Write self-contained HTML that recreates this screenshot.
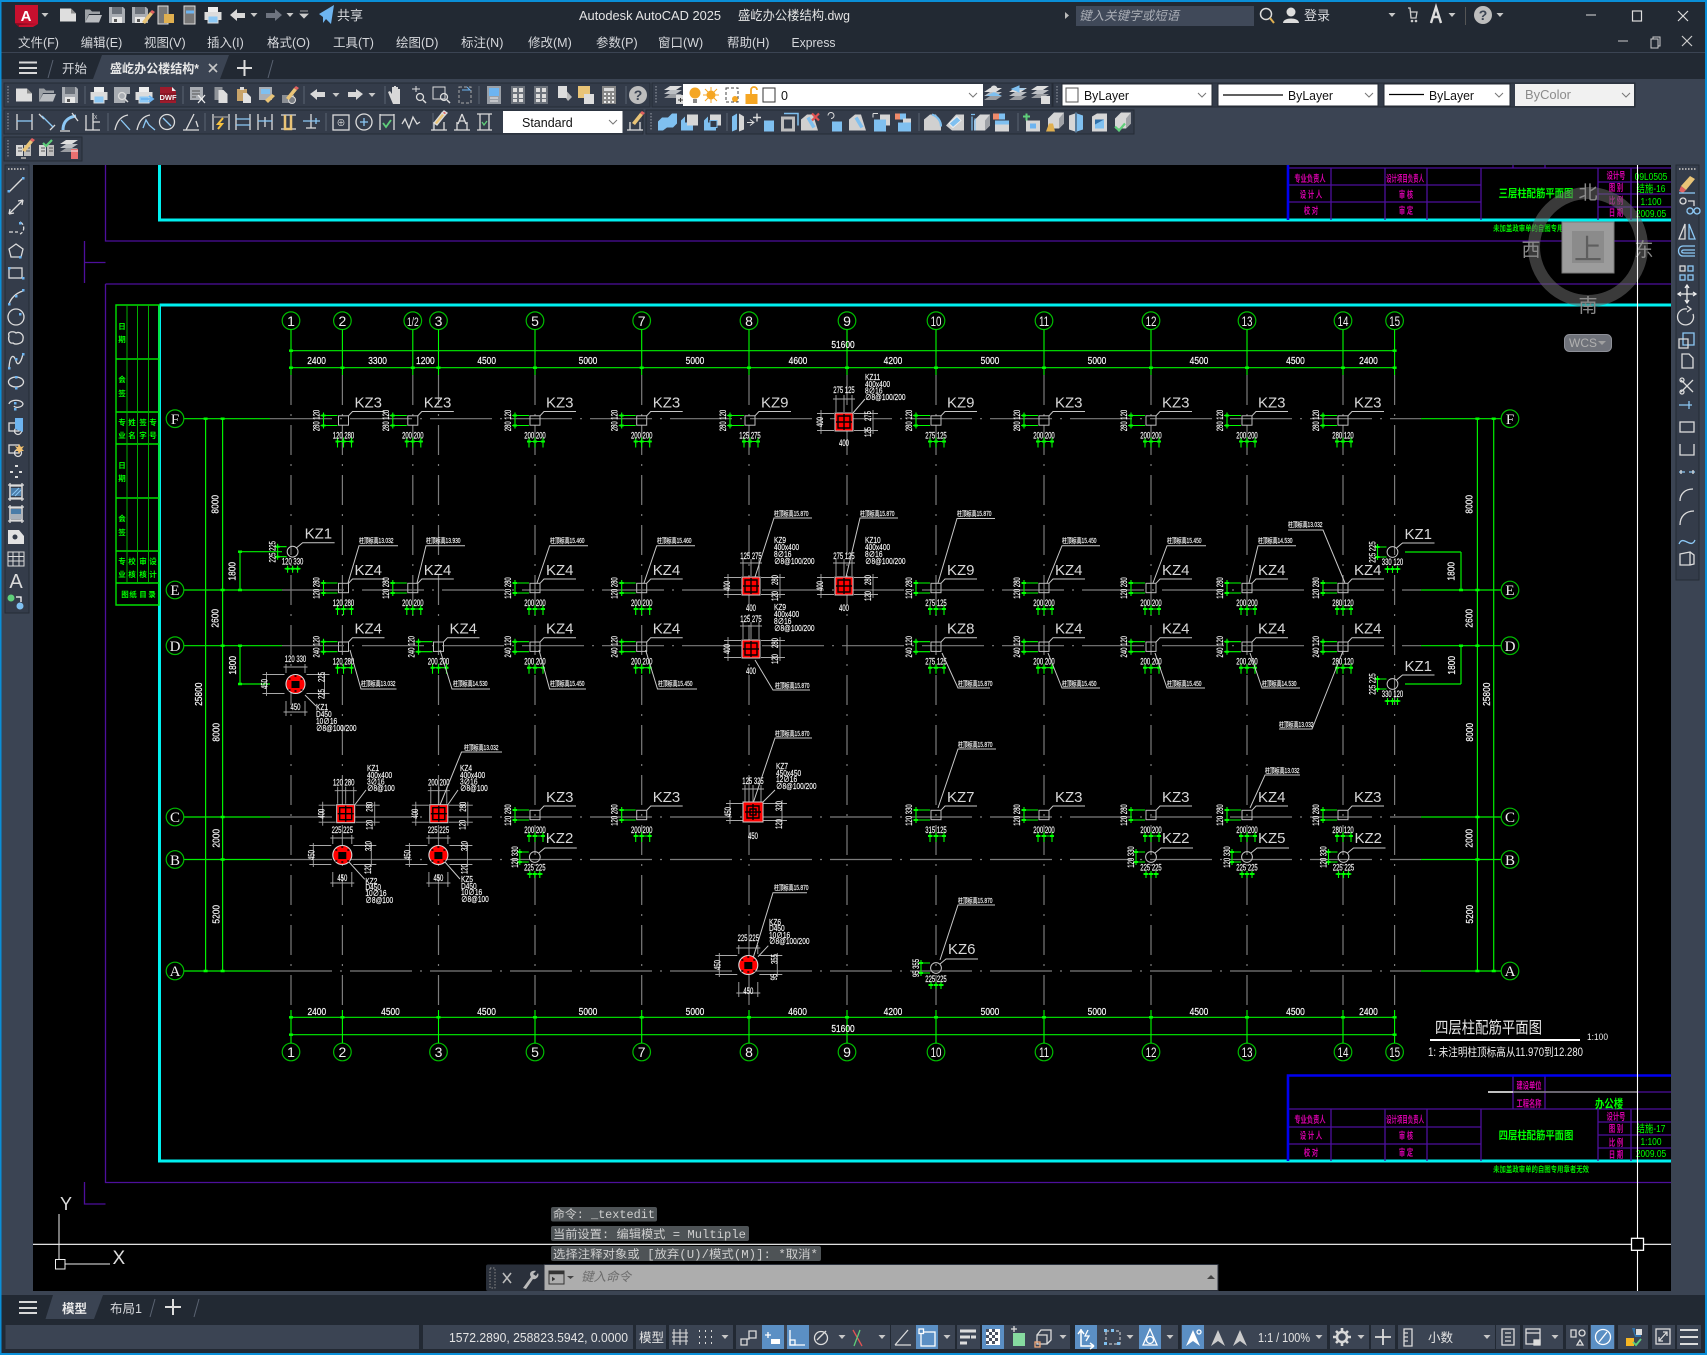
<!DOCTYPE html>
<html lang="zh"><head><meta charset="utf-8"><title>Autodesk AutoCAD 2025</title>
<style>
html,body{margin:0;padding:0;background:#222933;width:1707px;height:1355px;overflow:hidden}
svg{position:absolute;left:0;top:0;display:block}
text{font-family:"Liberation Sans","Noto Sans CJK SC",sans-serif}
.u{font-size:12.5px;fill:#d6d8dc}
.k{font-size:15px;fill:#d8d8d8}
.n{font-size:9px;fill:#f4f4f4;stroke:#fff;stroke-width:.15;text-anchor:middle;transform-box:fill-box;transform-origin:center;transform:scaleX(.66)}
.r{font-size:9px;fill:#f4f4f4;stroke:#fff;stroke-width:.15;text-anchor:middle;transform-box:fill-box;transform-origin:center;transform:rotate(-90deg) scaleX(.66)}
.m{font-size:10.5px;fill:#f4f4f4;stroke:#fff;stroke-width:.2;text-anchor:middle;transform-box:fill-box;transform-origin:center;transform:scaleX(.8)}
.q{font-size:10.5px;fill:#f4f4f4;stroke:#fff;stroke-width:.2;text-anchor:middle;transform-box:fill-box;transform-origin:center;transform:rotate(-90deg) scaleX(.8)}
.e{font-size:7px;fill:#fff;stroke:#fff;stroke-width:.15;transform-box:fill-box;transform-origin:0 50%;transform:scaleX(.7)}
.a{font-size:8px;fill:#f2f2f2;stroke:#fff;stroke-width:.15;transform-box:fill-box;transform-origin:0 50%;transform:scaleX(.82)}
.b{font-size:14px;fill:#f0f0f0;text-anchor:middle}
.bb{font-size:14px;fill:#f0f0f0;text-anchor:middle;transform-box:fill-box;transform-origin:center;transform:scaleX(.7)}
.l{font-size:15px;fill:#f0f0f0;text-anchor:middle;font-family:"Liberation Serif",serif}
.p{font-size:9.5px;fill:#d400a8;font-weight:700;text-anchor:middle;transform-box:fill-box;transform-origin:center;transform:scaleX(.66)}
.p2{font-size:9.5px;fill:#d400a8;font-weight:700;text-anchor:middle;transform-box:fill-box;transform-origin:center;transform:scaleX(.57)}
.g{font-size:8px;fill:#00e800;font-weight:700;text-anchor:middle;transform-box:fill-box;transform-origin:center;transform:scaleX(.8)}
.h{font-size:11px;fill:#0f0;font-weight:700;text-anchor:middle;transform-box:fill-box;transform-origin:center;transform:scaleX(.85)}
.g2{font-size:10.5px;fill:#00ff00;text-anchor:middle;transform-box:fill-box;transform-origin:center;transform:scaleX(.8)}
.c{font-size:11.5px;fill:#cfcfcf;font-family:"Liberation Mono","Noto Sans CJK SC",monospace}
.w{fill:none;stroke:#dcdcdc;stroke-width:1.3}
.bl{stroke:#8cc8f5}
</style></head><body>
<svg xmlns="http://www.w3.org/2000/svg" width="1707" height="1355" viewBox="0 0 1707 1355">
<defs>
<g id="tri"><path d="M-3.5-2h7L0 2z" fill="#c8c8c8"/></g>
<g id="chev"><path d="M-4-2 0 2 4-2" fill="none" stroke="#777" stroke-width="1"/></g>
<g id="doc"><path d="M-8-6.5H3L8-1.500V6.500H-8z" fill="#dedede"/><path d="M3-6.500V-1.500H8z" fill="#8e8e8e"/></g>
<g id="fold"><path d="M-8-6.500H-3L-1-4.500H7V-2H-4L-8 6.500z" fill="#9da1a6"/><path d="M-4-1H9L6 6.500H-8z" fill="#b9bcc0"/></g>
<g id="save"><path d="M-8-8H6L8-6V8H-8z" fill="#a9adb3"/><path d="M-5-8H5V-1H-5z" fill="#6b717a"/><path d="M-5 2H5V8H-5z" fill="#e8e8e8"/><path d="M-3 4H0V7H-3z" fill="#555"/></g>
<g id="pen"><path d="M-2 7 6-3l3 2L1 9z" fill="#e9c477"/><path d="M6-3l2-2 3 2-2 2z" fill="#e06060"/></g>
<g id="print"><path d="M-5-8H5V-3H-5z" fill="#eee"/><path d="M-8.500-3H8.500V5H-8.500z" fill="#dcdcdc"/><path d="M-5 1H5V8H-5z" fill="#8cc8f5" stroke="#dcdcdc"/></g>
<g id="mag"><circle cx="2" cy="2" r="3.500" fill="none" stroke="#ddd" stroke-width="1.300"/><path d="M5 5l3 3" stroke="#ddd" stroke-width="1.500"/></g>
<g id="dwf"><path d="M-8-8H4L8-4V8H-8z" fill="#9e1b2c"/><path d="M-8-2H8V6H-8z" fill="#8a1626"/><text y="5" font-size="7.500" font-weight="700" text-anchor="middle" fill="#f0f0f0">DWF</text><path d="M4-8V-4H8z" fill="#eee"/></g>
<g id="copy"><path d="M-6-8H2V5H-6z" fill="#8f9399"/><path d="M-2-5H3L7-1V8H-2z" fill="#dedede"/></g>
<g id="paste"><path d="M-7-6H3V6H-7z" fill="#c9a46a"/><path d="M-4-8H0V-5H-4z" fill="#ddd"/><path d="M-1-2H3L7 2V8H-1z" fill="#e2e2e2"/></g>
<g id="hand"><path d="M-6 2-8-3l2-1 2 3V-8h2v6V-9h2v7V-8h2v6V-6h2V3L4 9H-3z" fill="#d8d8d8"/></g>
<g id="bar"><path d="M-7-9H7V9H-7z" fill="#9a9fa6"/><path d="M-5-7H5V1H-5z" fill="#6db4f0"/><path d="M-4 3H4M-4 6H4" stroke="#eee"/></g>
<g id="grd"><path d="M-7-9H7V9H-7z" fill="#6d737c"/><path d="M-5-7H-1v4H-5zM-5-1H-1v4H-5zM-5 4H-1v3H-5zM1-7H5v4H1zM1-1H5v4H1zM1 4H5v3H1z" fill="#ddd"/></g>
<g id="calc"><path d="M-7-9H7V9H-7z" fill="#888"/><path d="M-5-7H5v3H-5z" fill="#ddd"/><path d="M-5-2h2v2h-2zM-1-2h2v2h-2zM3-2h2v2H3zM-5 2h2v2h-2zM-1 2h2v2h-2zM3 2h2v2H3zM-5 6h2v2h-2zM-1 6h2v2h-2zM3 6h2v2H3z" fill="#eee"/></g>
<g id="help"><circle r="9" fill="#bdbdbd"/><text x="0" y="5" font-size="14" font-weight="700" text-anchor="middle" fill="#3b4453">?</text></g>
<g id="lay"><path d="M-9-1H3L9-5-3-5z" fill="#9a9da2" transform="translate(0,4)"/><path d="M-9-1H3L9-5-3-5z" fill="#bcbfc3" transform="translate(0,0)"/><path d="M-9-1H3L9-5-3-5z" fill="#dedede" transform="translate(0,-4)"/></g>
<g id="iso"><path d="M-8-2-2-8H8V3L3 8H-8z" fill="#d6d6d6"/><path d="M3-2H-8-2M3-2 8-8V3L3 8z" fill="#9fa2a7"/></g>
<g id="b3"><path d="M-9 8V-1L-5-5H1L5-9H10V1L6 5H0L-4 8z" fill="#7fc0f0"/></g>
<g id="b4"><path d="M-9-2-5-6V8H-9z" fill="#7fc0f0"/><path d="M-7 0H3V8H-7z" fill="#7fc0f0"/><path d="M-3-8H8V3H4L-3 3z" fill="#d6d6d6"/></g>
<g id="b5"><path d="M-8-6-3-9V7L-8 9z" fill="#7fc0f0"/><path d="M-1-9 4-6V7L-1 9z" fill="#d6d6d6"/></g>
<g id="b6"><path d="M-8-3-2-8H4L9 8H-8z" fill="#d0d0d0"/><path d="M-1-5 5 5" stroke="#7fc0f0" stroke-width="3.500"/></g>
<g id="c"><rect x="-5" y="-4.7" width="10" height="9.4" fill="none" stroke="#bdbdbd"/><path d="M5-4.7 9-9H41" fill="none" stroke="#c8c8c8"/><path d="M-23-5H-6M-23 5H-6M-20-8V8M-6 17V27M0 17V27M8 17V27M-8 21H10" fill="none" stroke="#0f0" stroke-width="1.1"/><path d="M-22-5h4M-22 5h4M-8 21h4M-2 21h4M6 21h4" stroke="#0f0" stroke-width="2"/></g>
<g id="o"><circle r="5.4" fill="none" stroke="#c8c8c8"/><path d="M4-4 10-9H42" fill="none" stroke="#c8c8c8"/><path d="M-18-5H-6M-18 5H-6M-15-8V8M-5 14V21M0 14V21M5 14V21M-8 17H8" fill="none" stroke="#0f0" stroke-width="1.1"/><path d="M-17-5h4M-17 5h4M-7 17h4M-2 17h4M3 17h4" stroke="#0f0" stroke-width="2"/></g>
<g id="rs"><rect x="-9" y="-9" width="18" height="18" fill="#f00" stroke="#d0d0d0"/><path d="M-6-6H6V6H-6zM0-8V8M-8 0H8" fill="none" stroke="#000" stroke-width="1.4"/><path d="M-27-8.5H-10M-27 8.5H-10M-23-12V12M10-8.5H34M10 8.5H34M29-12V12M-8-27V-10M0-27V-10M8-27V-10M-11-23H11" fill="none" stroke="#a8a8a8" stroke-width=".9"/></g>
<g id="rc"><circle r="9.5" fill="#f00" stroke="#d8d8d8" stroke-width="1.1"/><path d="M-4-3H4V4H-4z" fill="#000"/><path d="M-7-5h2M5-5h2M-7 6h2M5 6h2M-1-8h2M-1 7h2" stroke="#000" stroke-width="1.5"/><path d="M-33-9.5H-11M-33 9.5H-11M-29-12V12M11-9.5H34M11 9.5H34M29-12V12M-9.5 17V32M9.5 17V32M-12 28H12M-9.5-20V-11M9.5-20V-11M-12-17H12" fill="none" stroke="#a8a8a8" stroke-width=".9"/></g>
<g id="at"><circle cy="320.7" r="8.8" fill="none" stroke="#0b0" stroke-width="1.2"/><path d="M0 329.5V375" stroke="#0f0" stroke-width="1.1"/><path d="M-2 367.7h4" stroke="#0f0" stroke-width="2.4"/></g>
<g id="ab"><circle cy="1052" r="8.8" fill="none" stroke="#0b0" stroke-width="1.2"/><path d="M0 1043.2V1010" stroke="#0f0" stroke-width="1.1"/><path d="M-2 1017.3h4" stroke="#0f0" stroke-width="2.4"/></g>
<g id="lb"><circle r="8.8" fill="none" stroke="#0b0" stroke-width="1.2"/></g>
</defs>

<!-- chrome backgrounds -->
<rect width="1707" height="1355" fill="#222933"/>
<rect x="0" y="52" width="1707" height="1" fill="#3b4453"/>
<rect x="0" y="79" width="1707" height="86" fill="#3b4453"/>
<rect x="0" y="165" width="33" height="1130" fill="#3b4453"/>
<rect x="1671" y="165" width="36" height="1130" fill="#3b4453"/>
<rect x="33" y="165" width="1638" height="1126" fill="#000"/>
<rect x="0" y="1291" width="1707" height="4" fill="#3b4453"/>

<!-- drawing -->
<svg x="33" y="165" width="1638" height="1126" viewBox="33 165 1638 1126">
<path d="M105.5 165V241H1671M84.5 241V283M84.5 262.5H105.5M105.5 284V1182.5H1671M105.5 284H1671M84.5 1182V1204H105.5" fill="none" stroke="#4d0f9c" stroke-width="1.3"/>
<path d="M159.5 165V220H1671M159.5 305V1161H1671M159.5 305H1671" fill="none" stroke="#00f0f0" stroke-width="3"/>

<!-- left tab -->
<path d="M116 305H159V605H116zM116 359H159M116 412H159M116 444H159M116 498H159M116 551H159M116 583H159" fill="none" stroke="#00e000" stroke-width="1.4"/>
<path d="M127 305V583M137.5 305V583M148.5 305V583" fill="none" stroke="#00b000"/>
<g font-size="7.5" font-weight="700" fill="#0f0" text-anchor="middle"><text x="122" y="329">日</text><text x="122" y="342">期</text><text x="122" y="382">会</text><text x="122" y="396">签</text><text x="122" y="425">专</text><text x="122" y="438">业</text><text x="132" y="425">姓</text><text x="132" y="438">名</text><text x="143" y="425">签</text><text x="143" y="438">字</text><text x="153" y="425">专</text><text x="153" y="438">号</text><text x="122" y="468">日</text><text x="122" y="481">期</text><text x="122" y="521">会</text><text x="122" y="535">签</text><text x="122" y="564">专</text><text x="122" y="577">业</text><text x="132" y="564">校</text><text x="132" y="577">核</text><text x="143" y="564">审</text><text x="143" y="577">核</text><text x="153" y="564">设</text><text x="153" y="577">计</text><text x="125" y="597">图</text><text x="133" y="597">纸</text><text x="143" y="597">目</text><text x="152" y="597">录</text></g>

<!-- axis lines -->
<g fill="none" stroke="#7c7c7c" stroke-width="1.2">
<path stroke-dasharray="62 8 2 8" d="M270 418.7H1421M282 590H1421M282 645.7H1421M270 817H1421M270 859.5H1421M270 971H1421"/>
<path stroke-dasharray="30 9 2 9" d="M291 375V1010M342.4 375V1010M412.8 375V625M438.5 375V1010M535 375V1010M641.7 375V1010M749 375V1010M847 375V1010M936 375V1010M1044 375V1010M1151 375V1010M1247 375V1010M1343 375V1010M1394.6 375V1010"/>
</g>
<g fill="none" stroke="#00f000" stroke-width="1.2">
<path d="M184 418.7H270M184 590H282M184 645.7H282M184 817H270M184 859.5H270M184 971H270M1421 418.7H1501M1421 590H1501M1421 645.7H1501M1421 817H1501M1421 859.5H1501M1421 971H1501"/>
<path d="M205.6 418.7V971M222.6 418.7V971M240 551.7V590M240 645.7V684M240 551.7H282M240 684H270M1477.4 418.7V971M1493.7 418.7V971M1461 552V590M1461 645.7V684M1405 552H1461M1405 684H1461"/>
<path d="M289 350.7H1396M289 367.7H1396M289 1017.3H1396M289 1034.7H1396"/>
</g>
<path d="M203.6 418.7h4M220.6 418.7h4M220.6 590h4M220.6 645.7h4M220.6 817h4M220.6 859.5h4M203.6 971h4M220.6 971h4M238 590h4M238 645.7h4M238 551.7h4M238 684h4M1475.4 418.7h4M1491.7 418.7h4M1475.4 590h4M1475.4 645.7h4M1475.4 817h4M1475.4 859.5h4M1475.4 971h4M1491.7 971h4M1459 590h4M1459 645.7h4M289 350.7h4M1392.6 350.7h4M289 1034.7h4M1392.6 1034.7h4" stroke="#0f0" stroke-width="2.4"/>

<use href="#at" x="291"/><use href="#at" x="342.4"/><use href="#at" x="412.8"/><use href="#at" x="438.5"/><use href="#at" x="535"/><use href="#at" x="641.7"/><use href="#at" x="749"/><use href="#at" x="847"/><use href="#at" x="936"/><use href="#at" x="1044"/><use href="#at" x="1151"/><use href="#at" x="1247"/><use href="#at" x="1343"/><use href="#at" x="1394.6"/>
<use href="#ab" x="291"/><use href="#ab" x="342.4"/><use href="#ab" x="438.5"/><use href="#ab" x="535"/><use href="#ab" x="641.7"/><use href="#ab" x="749"/><use href="#ab" x="847"/><use href="#ab" x="936"/><use href="#ab" x="1044"/><use href="#ab" x="1151"/><use href="#ab" x="1247"/><use href="#ab" x="1343"/><use href="#ab" x="1394.6"/>
<text class="b" x="291" y="326">1</text><text class="b" x="342.4" y="326">2</text><text class="bb" x="412.8" y="326" style="font-size:12px">1/2</text><text class="b" x="438.5" y="326">3</text><text class="b" x="535" y="326">5</text><text class="b" x="641.7" y="326">7</text><text class="b" x="749" y="326">8</text><text class="b" x="847" y="326">9</text><text class="bb" x="936" y="326">10</text><text class="bb" x="1044" y="326">11</text><text class="bb" x="1151" y="326">12</text><text class="bb" x="1247" y="326">13</text><text class="bb" x="1343" y="326">14</text><text class="bb" x="1394.6" y="326">15</text>
<text class="b" x="291" y="1057">1</text><text class="b" x="342.4" y="1057">2</text><text class="b" x="438.5" y="1057">3</text><text class="b" x="535" y="1057">5</text><text class="b" x="641.7" y="1057">7</text><text class="b" x="749" y="1057">8</text><text class="b" x="847" y="1057">9</text><text class="bb" x="936" y="1057">10</text><text class="bb" x="1044" y="1057">11</text><text class="bb" x="1151" y="1057">12</text><text class="bb" x="1247" y="1057">13</text><text class="bb" x="1343" y="1057">14</text><text class="bb" x="1394.6" y="1057">15</text>
<use href="#lb" x="175" y="418.7"/><use href="#lb" x="175" y="590"/><use href="#lb" x="175" y="645.7"/><use href="#lb" x="175" y="817"/><use href="#lb" x="175" y="859.5"/><use href="#lb" x="175" y="971"/><use href="#lb" x="1510" y="418.7"/><use href="#lb" x="1510" y="590"/><use href="#lb" x="1510" y="645.7"/><use href="#lb" x="1510" y="817"/><use href="#lb" x="1510" y="859.5"/><use href="#lb" x="1510" y="971"/>
<text class="l" x="175" y="424">F</text><text class="l" x="175" y="595">E</text><text class="l" x="175" y="651">D</text><text class="l" x="175" y="822">C</text><text class="l" x="175" y="865">B</text><text class="l" x="175" y="976">A</text><text class="l" x="1510" y="424">F</text><text class="l" x="1510" y="595">E</text><text class="l" x="1510" y="651">D</text><text class="l" x="1510" y="822">C</text><text class="l" x="1510" y="865">B</text><text class="l" x="1510" y="976">A</text>

<!-- main dim texts -->
<g><text class="m" x="316.6" y="364">2400</text><text class="m" x="377.6" y="364">3300</text><text class="m" x="425.4" y="364">1200</text><text class="m" x="486.7" y="364">4500</text><text class="m" x="588" y="364">5000</text><text class="m" x="695" y="364">5000</text><text class="m" x="798" y="364">4600</text><text class="m" x="893" y="364">4200</text><text class="m" x="990" y="364">5000</text><text class="m" x="1097" y="364">5000</text><text class="m" x="1199" y="364">4500</text><text class="m" x="1295.5" y="364">4500</text><text class="m" x="1368.5" y="364">2400</text><text class="m" x="843" y="348">51600</text>
<text class="m" x="316.8" y="1015">2400</text><text class="m" x="390.5" y="1015">4500</text><text class="m" x="486.6" y="1015">4500</text><text class="m" x="588" y="1015">5000</text><text class="m" x="695" y="1015">5000</text><text class="m" x="797.6" y="1015">4600</text><text class="m" x="893" y="1015">4200</text><text class="m" x="990" y="1015">5000</text><text class="m" x="1097" y="1015">5000</text><text class="m" x="1199" y="1015">4500</text><text class="m" x="1295.5" y="1015">4500</text><text class="m" x="1368.5" y="1015">2400</text><text class="m" x="843" y="1032">51600</text>
<text class="q" x="216" y="507">8000</text><text class="q" x="216" y="621">2600</text><text class="q" x="199" y="697">25800</text><text class="q" x="216.6" y="735">8000</text><text class="q" x="216.6" y="841">2000</text><text class="q" x="216.6" y="917">5200</text><text class="q" x="233" y="574">1800</text><text class="q" x="233" y="668">1800</text>
<text class="q" x="1470" y="507">8000</text><text class="q" x="1470" y="621">2600</text><text class="q" x="1487" y="697">25800</text><text class="q" x="1470" y="735">8000</text><text class="q" x="1470" y="841">2000</text><text class="q" x="1470" y="917">5200</text><text class="q" x="1452" y="574">1800</text><text class="q" x="1452" y="668">1800</text></g>

<!-- F row -->
<g transform="translate(343.5,420.5)"><use href="#c"/><text class="k" x="11" y="-13">KZ3</text><text class="n" x="0" y="18">120 280</text><text class="r" x="-27" y="3">280 120</text></g>
<g transform="translate(412.8,420.5)"><use href="#c"/><text class="k" x="11" y="-13">KZ3</text><text class="n" x="0" y="18">200 200</text><text class="r" x="-27" y="3">280 120</text></g>
<g transform="translate(535,420.5)"><use href="#c"/><text class="k" x="11" y="-13">KZ3</text><text class="n" x="0" y="18">200 200</text><text class="r" x="-27" y="3">280 120</text></g>
<g transform="translate(641.7,420.5)"><use href="#c"/><text class="k" x="11" y="-13">KZ3</text><text class="n" x="0" y="18">200 200</text><text class="r" x="-27" y="3">280 120</text></g>
<g transform="translate(750,420.5)"><use href="#c"/><text class="k" x="11" y="-13">KZ9</text><text class="n" x="0" y="18">125 275</text><text class="r" x="-27" y="3">280 120</text></g>
<g transform="translate(936,420.5)"><use href="#c"/><text class="k" x="11" y="-13">KZ9</text><text class="n" x="0" y="18">275 125</text><text class="r" x="-27" y="3">280 120</text></g>
<g transform="translate(1044,420.5)"><use href="#c"/><text class="k" x="11" y="-13">KZ3</text><text class="n" x="0" y="18">200 200</text><text class="r" x="-27" y="3">280 120</text></g>
<g transform="translate(1151,420.5)"><use href="#c"/><text class="k" x="11" y="-13">KZ3</text><text class="n" x="0" y="18">200 200</text><text class="r" x="-27" y="3">280 120</text></g>
<g transform="translate(1247,420.5)"><use href="#c"/><text class="k" x="11" y="-13">KZ3</text><text class="n" x="0" y="18">200 200</text><text class="r" x="-27" y="3">280 120</text></g>
<g transform="translate(1343,420.5)"><use href="#c"/><text class="k" x="11" y="-13">KZ3</text><text class="n" x="0" y="18">280 120</text><text class="r" x="-27" y="3">280 120</text></g>
<!-- E row -->
<g transform="translate(343.5,588)"><use href="#c"/><text class="k" x="11" y="-13">KZ4</text><text class="n" x="0" y="18">120 280</text><text class="r" x="-27" y="3">120 280</text></g>
<g transform="translate(412.8,588)"><use href="#c"/><text class="k" x="11" y="-13">KZ4</text><text class="n" x="0" y="18">200 200</text><text class="r" x="-27" y="3">120 280</text></g>
<g transform="translate(535,588)"><use href="#c"/><text class="k" x="11" y="-13">KZ4</text><text class="n" x="0" y="18">200 200</text><text class="r" x="-27" y="3">120 280</text></g>
<g transform="translate(641.7,588)"><use href="#c"/><text class="k" x="11" y="-13">KZ4</text><text class="n" x="0" y="18">200 200</text><text class="r" x="-27" y="3">120 280</text></g>
<g transform="translate(936,588)"><use href="#c"/><text class="k" x="11" y="-13">KZ9</text><text class="n" x="0" y="18">275 125</text><text class="r" x="-27" y="3">120 280</text></g>
<g transform="translate(1044,588)"><use href="#c"/><text class="k" x="11" y="-13">KZ4</text><text class="n" x="0" y="18">200 200</text><text class="r" x="-27" y="3">120 280</text></g>
<g transform="translate(1151,588)"><use href="#c"/><text class="k" x="11" y="-13">KZ4</text><text class="n" x="0" y="18">200 200</text><text class="r" x="-27" y="3">120 280</text></g>
<g transform="translate(1247,588)"><use href="#c"/><text class="k" x="11" y="-13">KZ4</text><text class="n" x="0" y="18">200 200</text><text class="r" x="-27" y="3">120 280</text></g>
<g transform="translate(1343,588)"><use href="#c"/><text class="k" x="11" y="-13">KZ4</text><text class="n" x="0" y="18">280 120</text><text class="r" x="-27" y="3">120 280</text></g>
<!-- D row -->
<g transform="translate(343.5,646.7)"><use href="#c"/><text class="k" x="11" y="-13">KZ4</text><text class="n" x="0" y="18">120 280</text><text class="r" x="-27" y="3">240 120</text></g>
<g transform="translate(438.5,646.7)"><use href="#c"/><text class="k" x="11" y="-13">KZ4</text><text class="n" x="0" y="18">200 200</text><text class="r" x="-27" y="3">240 120</text></g>
<g transform="translate(535,646.7)"><use href="#c"/><text class="k" x="11" y="-13">KZ4</text><text class="n" x="0" y="18">200 200</text><text class="r" x="-27" y="3">240 120</text></g>
<g transform="translate(641.7,646.7)"><use href="#c"/><text class="k" x="11" y="-13">KZ4</text><text class="n" x="0" y="18">200 200</text><text class="r" x="-27" y="3">240 120</text></g>
<g transform="translate(936,646.7)"><use href="#c"/><text class="k" x="11" y="-13">KZ8</text><text class="n" x="0" y="18">275 125</text><text class="r" x="-27" y="3">240 120</text></g>
<g transform="translate(1044,646.7)"><use href="#c"/><text class="k" x="11" y="-13">KZ4</text><text class="n" x="0" y="18">200 200</text><text class="r" x="-27" y="3">240 120</text></g>
<g transform="translate(1151,646.7)"><use href="#c"/><text class="k" x="11" y="-13">KZ4</text><text class="n" x="0" y="18">200 200</text><text class="r" x="-27" y="3">240 120</text></g>
<g transform="translate(1247,646.7)"><use href="#c"/><text class="k" x="11" y="-13">KZ4</text><text class="n" x="0" y="18">200 200</text><text class="r" x="-27" y="3">240 120</text></g>
<g transform="translate(1343,646.7)"><use href="#c"/><text class="k" x="11" y="-13">KZ4</text><text class="n" x="0" y="18">280 120</text><text class="r" x="-27" y="3">240 120</text></g>
<!-- C row -->
<g transform="translate(535,815)"><use href="#c"/><text class="k" x="11" y="-13">KZ3</text><text class="n" x="0" y="18">200 200</text><text class="r" x="-27" y="3">120 280</text></g>
<g transform="translate(641.7,815)"><use href="#c"/><text class="k" x="11" y="-13">KZ3</text><text class="n" x="0" y="18">200 200</text><text class="r" x="-27" y="3">120 280</text></g>
<g transform="translate(936,815)"><use href="#c"/><text class="k" x="11" y="-13">KZ7</text><text class="n" x="0" y="18">315 125</text><text class="r" x="-27" y="3">120 330</text></g>
<g transform="translate(1044,815)"><use href="#c"/><text class="k" x="11" y="-13">KZ3</text><text class="n" x="0" y="18">200 200</text><text class="r" x="-27" y="3">120 280</text></g>
<g transform="translate(1151,815)"><use href="#c"/><text class="k" x="11" y="-13">KZ3</text><text class="n" x="0" y="18">200 200</text><text class="r" x="-27" y="3">120 280</text></g>
<g transform="translate(1247,815)"><use href="#c"/><text class="k" x="11" y="-13">KZ4</text><text class="n" x="0" y="18">200 200</text><text class="r" x="-27" y="3">120 280</text></g>
<g transform="translate(1343,815)"><use href="#c"/><text class="k" x="11" y="-13">KZ3</text><text class="n" x="0" y="18">280 120</text><text class="r" x="-27" y="3">120 280</text></g>
<!-- round small -->
<g transform="translate(292.6,551.7)"><use href="#o"/><text class="k" x="12" y="-13">KZ1</text><text class="n" x="0" y="13">120 330</text><text class="r" x="-20" y="3">225 225</text></g>
<g transform="translate(1392.5,552)"><use href="#o"/><text class="k" x="12" y="-13">KZ1</text><text class="n" x="0" y="13">330 120</text><text class="r" x="-20" y="3">225 225</text></g>
<g transform="translate(1392.5,684)"><use href="#o"/><text class="k" x="12" y="-13">KZ1</text><text class="n" x="0" y="13">330 120</text><text class="r" x="-20" y="3">225 225</text></g>
<g transform="translate(534.8,857)"><use href="#o"/><text class="k" x="11" y="-14">KZ2</text><text class="n" x="0" y="13.5">225 225</text><text class="r" x="-20" y="3">120 330</text></g>
<g transform="translate(1151,857)"><use href="#o"/><text class="k" x="11" y="-14">KZ2</text><text class="n" x="0" y="13.5">225 225</text><text class="r" x="-20" y="3">120 330</text></g>
<g transform="translate(1247,857)"><use href="#o"/><text class="k" x="11" y="-14">KZ5</text><text class="n" x="0" y="13.5">225 225</text><text class="r" x="-20" y="3">120 330</text></g>
<g transform="translate(1343.5,857)"><use href="#o"/><text class="k" x="11" y="-14">KZ2</text><text class="n" x="0" y="13.5">225 225</text><text class="r" x="-20" y="3">120 330</text></g>
<g transform="translate(936,968)"><use href="#o"/><text class="k" x="12" y="-14">KZ6</text><text class="n" x="0" y="14">225 225</text><text class="r" x="-20" y="3">95 355</text></g>

<!-- red square columns -->
<g transform="translate(844,422)"><use href="#rs"/><text class="r" x="-24" y="3">400</text><text class="r" x="24" y="-3">275</text><text class="r" x="24" y="13">125</text><text class="n" x="0" y="-29">275 125</text><text class="n" x="0" y="24">400</text></g>
<path d="M853 413 865 399" stroke="#ccc"/><text class="a" x="865" y="380">KZ11</text><text class="a" x="865" y="387">400x400</text><text class="a" x="865" y="393.500">8∅16</text><text class="a" x="865" y="400">∅8@100/200</text>
<g transform="translate(751,586)"><use href="#rs"/><text class="r" x="-24" y="3">400</text><text class="r" x="24" y="-3">280</text><text class="r" x="24" y="13">120</text><text class="n" x="0" y="-27">125 275</text><text class="n" x="0" y="25">400</text></g>
<g transform="translate(844,586)"><use href="#rs"/><text class="r" x="-24" y="3">400</text><text class="r" x="24" y="-3">280</text><text class="r" x="24" y="13">120</text><text class="n" x="0" y="-27">275 125</text><text class="n" x="0" y="25">400</text></g>
<g transform="translate(751,649)"><use href="#rs"/><text class="r" x="-24" y="3">400</text><text class="r" x="24" y="-3">280</text><text class="r" x="24" y="13">120</text><text class="n" x="0" y="-27">125 275</text><text class="n" x="0" y="25">400</text></g>
<g transform="translate(345.7,813.7)"><use href="#rs"/><text class="r" x="-24" y="3">400</text><text class="r" x="24" y="-4">280</text><text class="r" x="24" y="14">120</text><text class="n" x="-2" y="-28">120 280</text></g>
<g transform="translate(438.8,813.7)"><use href="#rs"/><text class="r" x="-24" y="3">400</text><text class="r" x="24" y="-4">280</text><text class="r" x="24" y="14">120</text><text class="n" x="0" y="-28">200 200</text></g>
<g transform="translate(753,812)"><use href="#rs"/><rect x="-10" y="-10" width="20" height="20" fill="#f00" stroke="#ccc"/><path d="M-6-6H6V6H-6zM0-8V8M-8 0H8M-3-3H3V3H-3z" fill="none" stroke="#000" stroke-width="1.4"/><text class="r" x="-25" y="3">450</text><text class="r" x="26" y="-3">320</text><text class="r" x="26" y="15">120</text><text class="n" x="0" y="-28">125 325</text><text class="n" x="0" y="27">450</text></g>
<!-- red round columns -->
<g transform="translate(295.5,684)"><use href="#rc"/><text class="r" x="-31" y="3">450</text><text class="r" x="26" y="-4">225</text><text class="r" x="26" y="13">225</text><text class="n" x="0" y="26">450</text><text class="n" x="0" y="-22">120 330</text></g>
<g transform="translate(342.3,855)"><use href="#rc"/><text class="r" x="-31" y="3">450</text><text class="r" x="26" y="-6">320</text><text class="r" x="26" y="17">120</text><text class="n" x="0" y="26">450</text><text class="n" x="0" y="-22">225 225</text></g>
<g transform="translate(438.4,855)"><use href="#rc"/><text class="r" x="-31" y="3">450</text><text class="r" x="26" y="-6">320</text><text class="r" x="26" y="17">120</text><text class="n" x="0" y="26">450</text><text class="n" x="0" y="-22">225 225</text></g>
<g transform="translate(748.3,965)"><use href="#rc"/><text class="r" x="-31" y="3">450</text><text class="r" x="26" y="-3">355</text><text class="r" x="26" y="15">95</text><text class="n" x="0" y="29">450</text><text class="n" x="0" y="-24">225 225</text></g>

<!-- annotation leaders -->
<g fill="none" stroke="#c8c8c8">
<path d="M348 583 359 545.700H398M417 583 426 545.700H465M537 583 549.600 545.700H588M644 583 656.700 545.700H695"/>
<path d="M938 583 957 518.500H995M1047 583 1062 545.700H1100M1153 583 1167 545.700H1206M1249 583 1258 545.700H1296M1345 583 1323 530H1288"/>
<path d="M755 577 774 518H812M846 577 860 518H898M755 660 773 690H810"/>
<path d="M350 650 361 689H396.500M440 650 452 689H490M539 650 549.600 689H586M645.600 650 657.500 689H697M942 653 958 688H990M1048 653 1062 688H1100M1155 653 1167 688H1205M1250 653 1262 688H1300M1343 651 1312 729H1279"/>
<path d="M354.700 805 366 790M447.700 805 458 790M440 805 461.500 752H502M763 802 775 790M753.500 802 775 738H812"/>
<path d="M938 808 958 749H996M1250 808 1265 775H1300"/>
<path d="M349 862 364.700 879.300M445 862 460 879M758 956.700 768.300 945.700M753.500 956.700 773 892.700H807M940 960 958 905H995"/>
<path d="M305 695 316 706"/>
</g>
<g>
<text class="e" x="359" y="543">柱顶标高13.032</text><text class="e" x="426" y="543">柱顶标高13.930</text><text class="e" x="550" y="543">柱顶标高15.460</text><text class="e" x="657" y="543">柱顶标高15.460</text>
<text class="e" x="957" y="516">柱顶标高15.870</text><text class="e" x="1062" y="543">柱顶标高15.450</text><text class="e" x="1167" y="543">柱顶标高15.450</text><text class="e" x="1258" y="543">柱顶标高14.530</text><text class="e" x="1288" y="527">柱顶标高13.032</text>
<text class="e" x="774" y="516">柱顶标高15.870</text><text class="e" x="860" y="516">柱顶标高15.870</text><text class="e" x="775" y="688">柱顶标高15.870</text>
<text class="e" x="361" y="686">柱顶标高13.032</text><text class="e" x="453" y="686">柱顶标高14.530</text><text class="e" x="550" y="686">柱顶标高15.450</text><text class="e" x="658" y="686">柱顶标高15.450</text><text class="e" x="958" y="686">柱顶标高15.870</text><text class="e" x="1062" y="686">柱顶标高15.450</text><text class="e" x="1167" y="686">柱顶标高15.450</text><text class="e" x="1262" y="686">柱顶标高14.530</text><text class="e" x="1279" y="727">柱顶标高13.032</text>
<text class="e" x="464" y="750">柱顶标高13.032</text><text class="e" x="775" y="736">柱顶标高15.870</text><text class="e" x="958" y="747">柱顶标高15.870</text><text class="e" x="1265" y="773">柱顶标高13.032</text><text class="e" x="774" y="890">柱顶标高15.870</text><text class="e" x="958" y="903">柱顶标高15.870</text>
<text class="a" x="774" y="543">KZ9</text><text class="a" x="774" y="550">400x400</text><text class="a" x="774" y="557">8∅16</text><text class="a" x="774" y="564">∅8@100/200</text>
<text class="a" x="865" y="543">KZ10</text><text class="a" x="865" y="550">400x400</text><text class="a" x="865" y="557">8∅16</text><text class="a" x="865" y="564">∅8@100/200</text>
<text class="a" x="774" y="610">KZ9</text><text class="a" x="774" y="617">400x400</text><text class="a" x="774" y="624">8∅16</text><text class="a" x="774" y="631">∅8@100/200</text>
<text class="a" x="316" y="710">KZ1</text><text class="a" x="316" y="717">D450</text><text class="a" x="316" y="724">10∅16</text><text class="a" x="316" y="731">∅8@100/200</text>
<text class="a" x="367" y="771">KZ1</text><text class="a" x="367" y="778">400x400</text><text class="a" x="367" y="784.500">3∅16</text><text class="a" x="367" y="791">∅8@100</text>
<text class="a" x="460" y="771">KZ4</text><text class="a" x="460" y="778">400x400</text><text class="a" x="460" y="784.500">3∅16</text><text class="a" x="460" y="791">∅8@100</text>
<text class="a" x="776" y="769">KZ7</text><text class="a" x="776" y="776">450x450</text><text class="a" x="776" y="782">12∅16</text><text class="a" x="776" y="789">∅8@100/200</text>
<text class="a" x="365.400" y="884">KZ2</text><text class="a" x="365.400" y="890">D450</text><text class="a" x="365.400" y="896">10∅16</text><text class="a" x="365.400" y="903">∅8@100</text>
<text class="a" x="461" y="882">KZ5</text><text class="a" x="461" y="889">D450</text><text class="a" x="461" y="895">10∅16</text><text class="a" x="461" y="902">∅8@100</text>
<text class="a" x="769" y="925">KZ6</text><text class="a" x="769" y="931">D450</text><text class="a" x="769" y="938">10∅16</text><text class="a" x="769" y="944">∅8@100/200</text>
</g>

<!-- title blocks -->
<g fill="none" stroke="#4d0f9c" stroke-width="1.3">
<path d="M1288 168H1671M1288 185H1481M1288 202H1481M1598 182H1671M1598 194H1671M1598 207H1671M1331 168V220M1385 168V220M1427 168V220M1481 168V220M1598 168V220M1631 168V220M1513 165V168M1545 165V168"/>
<path d="M1513 1092H1671M1288 1109H1671M1288 1127H1481M1288 1144H1481M1598 1122H1671M1598 1135H1671M1598 1148H1671M1331 1109V1161M1385 1109V1161M1427 1109V1161M1481 1109V1161M1598 1109V1161M1631 1109V1161M1513 1076V1109M1545 1076V1109"/>
</g>
<path d="M1288 165V220M1288 1161V1075.500H1671" fill="none" stroke="#0000f0" stroke-width="2.6"/>
<path d="M1488 1092H1513" stroke="#fff" stroke-width="1.4"/><path d="M1513 1092H1638" stroke="#888" stroke-width="1.4"/>
<path d="M1430 1040H1580" stroke="#fff" stroke-width="2"/>
<text class="p" x="1310" y="182">专业负责人</text><text class="p" x="1311" y="198">设 计 人</text><text class="p" x="1311" y="214">校   对</text><text class="p2" x="1405" y="182">设计项目负责人</text><text class="p" x="1406" y="198">审  核</text><text class="p" x="1406" y="214">审  定</text><text class="p" x="1616" y="179">设计号</text><text class="p" x="1616" y="191">图  别</text><text class="p" x="1616" y="204">比  例</text><text class="p" x="1616" y="216">日  期</text>
<text class="h" x="1536" y="197">三层柱配筋平面图</text>
<g><text class="g2" x="1651" y="180">09L0505</text><text class="g2" x="1651" y="192">结施-16</text><text class="g2" x="1651" y="205">1:100</text><text class="g2" x="1651" y="217">2009.05</text></g>
<text class="g" x="1541" y="231">未加盖政审单的自图专用章者无效</text>
<text class="p" x="1529" y="1089">建设单位</text><text class="p" x="1529" y="1107">工程名称</text>
<text x="1609" y="1108" font-size="12" font-weight="700" fill="#0f0" text-anchor="middle" style="transform-box:fill-box;transform-origin:center;transform:scaleX(.78)">办公楼</text>
<text class="p" x="1310" y="1123">专业负责人</text><text class="p" x="1311" y="1139">设 计 人</text><text class="p" x="1311" y="1156">校   对</text><text class="p2" x="1405" y="1123">设计项目负责人</text><text class="p" x="1406" y="1139">审  核</text><text class="p" x="1406" y="1156">审  定</text><text class="p" x="1616" y="1120">设计号</text><text class="p" x="1616" y="1132">图  别</text><text class="p" x="1616" y="1146">比  例</text><text class="p" x="1616" y="1158">日  期</text>
<text class="h" x="1536" y="1139">四层柱配筋平面图</text>
<text class="g2" x="1651" y="1132">结施-17</text><text class="g2" x="1651" y="1145">1:100</text><text class="g2" x="1651" y="1157">2009.05</text>
<text class="g" x="1541" y="1172">未加盖政审单的自图专用章者无效</text>
<text x="1435" y="1033" font-size="16" fill="#e8e8e8" textLength="107" lengthAdjust="spacingAndGlyphs">四层柱配筋平面图</text>
<text x="1587" y="1040" font-size="9" fill="#eee" textLength="21" lengthAdjust="spacingAndGlyphs">1:100</text>
<text x="1428" y="1056" font-size="11.500" fill="#eee" textLength="155" lengthAdjust="spacingAndGlyphs">1: 未注明柱顶标高从11.970到12.280</text>

<!-- viewcube -->
<circle cx="1588" cy="247" r="54" fill="none" stroke="#6a6a6a" stroke-opacity=".55" stroke-width="12"/>
<rect x="1562" y="222" width="52" height="51" fill="#9c9c9c" stroke="#777"/>
<rect x="1572" y="231" width="32" height="32" fill="#8b8b8b"/>
<text x="1588" y="259" font-size="28" fill="#5e5e5e" text-anchor="middle">上</text>
<g font-size="19" fill="#8a8a8a" text-anchor="middle"><text x="1588" y="199">北</text><text x="1588" y="312">南</text><text x="1644" y="256">东</text><text x="1531" y="256">西</text></g>
<rect x="1564.500" y="334.500" width="47" height="17" rx="5" fill="#6f727a" stroke="#8e9098"/>
<text x="1569" y="347" font-size="12" fill="#b0b0b0">WCS</text><path d="M1598 341h8l-4 4z" fill="#a0a0a0"/>

<!-- crosshair / ucs -->
<path d="M33 1244.300H1631M1644 1244.300H1671M1637.500 165V1238M1637.500 1250V1291" stroke="#fff" stroke-width="1.1"/>
<rect x="1631.500" y="1238.300" width="12" height="12" fill="none" stroke="#fff" stroke-width="1.3"/>
<path d="M59 1214V1259M65 1264H110" stroke="#eee"/>
<rect x="55.500" y="1259.500" width="9.500" height="9.500" fill="none" stroke="#eee"/>
<text x="60" y="1210" font-size="18" fill="#ddd">Y</text><text x="112.500" y="1264" font-size="19" fill="#ddd">X</text>

<!-- command history -->
<rect x="551" y="1207" width="106" height="14.500" rx="2" fill="#4e5356"/><rect x="551" y="1226" width="198" height="15" rx="2" fill="#4e5356"/><rect x="551" y="1246" width="270" height="15" rx="2" fill="#4e5356"/>
<text class="c" x="553" y="1218" textLength="102" lengthAdjust="spacingAndGlyphs">命令: _textedit</text>
<text class="c" x="553" y="1238" textLength="193" lengthAdjust="spacingAndGlyphs">当前设置: 编辑模式 = Multiple</text>
<text class="c" x="553" y="1258" textLength="265" lengthAdjust="spacingAndGlyphs">选择注释对象或 [放弃(U)/模式(M)]: *取消*</text>
<rect x="486" y="1264.500" width="58" height="26.500" rx="2" fill="#2a303b"/><rect x="544" y="1264.500" width="674" height="26" fill="#adadad" stroke="#2a303b"/>
<path d="M490 1268h5v20h-5z" fill="none" stroke="#888" stroke-dasharray="1.5 1.5"/>
<path d="M503 1273 511 1283M511 1273 503 1283" stroke="#bbb" stroke-width="1.6"/>
<path d="M523 1288 531 1277C528 1272 533 1270 536 1271L533 1274 536 1276 538 1273C540 1277 535 1280 533 1279L526 1289z" fill="#bbb"/>
<rect x="549" y="1271" width="15" height="13" fill="#adadad" stroke="#333"/><path d="M549 1271h15v3h-15zM552 1277l3 2-3 2" fill="#333" stroke="#333" stroke-width=".5"/>
<path d="M567 1276h7l-3.500 3z" fill="#444"/>
<text x="581" y="1281" font-size="12.500" fill="#6d6d6d" font-style="italic">键入命令</text>
<path d="M1207 1279h8l-4-4z" fill="#444"/>
</svg>

<!-- edges -->
<rect x="0" y="0" width="1707" height="2" fill="#0a8fd8"/><rect x="0" y="0" width="1.500" height="1355" fill="#0a8fd8"/><rect x="1705" y="0" width="2" height="1355" fill="#0a8fd8"/><rect x="0" y="1353" width="1707" height="2" fill="#0a8fd8"/>

<!-- title bar -->
<path d="M15 5H38V24L33 27H19L15 23z" fill="#c8102e"/><path d="M15 23 19 27V25L38 24" fill="#8a0a20"/><text x="26" y="21" font-size="15" font-weight="700" fill="#fff" text-anchor="middle">A</text>
<use href="#tri" x="45" y="15"/>
<use href="#doc" x="68" y="15"/><use href="#fold" x="93" y="16"/><use href="#save" x="117" y="15"/><use href="#save" x="140" y="15"/><use href="#pen" x="144" y="15"/>
<path d="M158 6H168V24H158z" fill="#777" stroke="#ddd"/><path d="M164 14H174V23H164z" fill="#e0b050"/>
<path d="M184 6H195V24H184z" fill="#777" stroke="#ddd"/><path d="M186 12H194" stroke="#6db4f0" stroke-width="3"/>
<use href="#print" x="213" y="15"/>
<path d="M230 15 237 9V13H245V18H237V21z" fill="#d8d8d8"/><use href="#tri" x="254" y="15"/>
<path d="M282 15 275 9V13H266V18H275V21z" fill="#6e7480"/><use href="#tri" x="290" y="15"/>
<path d="M300 11h8M300 14h8L304 18z" fill="#ccc" stroke="#ccc" stroke-width=".8"/>
<path d="M319 14 334 5 331 24 326 19 323 23V17z" fill="#6db4f0"/>
<text class="u" x="337" y="20" style="font-size:13px">共享</text>
<text x="579" y="20" font-size="13" fill="#e4e4e4" textLength="142" lengthAdjust="spacingAndGlyphs">Autodesk AutoCAD 2025</text>
<text x="738" y="20" font-size="13" fill="#e4e4e4" textLength="112" lengthAdjust="spacingAndGlyphs">盛屹办公楼结构.dwg</text>
<path d="M1065 12V19L1069 15.500z" fill="#bbb"/>
<rect x="1076" y="6" width="178" height="20" fill="#404959"/>
<text x="1079" y="20" font-size="12.500" font-style="italic" fill="#a9adb5">键入关键字或短语</text>
<circle cx="1266" cy="14" r="5.500" fill="none" stroke="#ddd" stroke-width="1.500"/><path d="M1270 18 1274 23" stroke="#e0b050" stroke-width="2"/>
<circle cx="1291" cy="12" r="4.500" fill="#ddd"/><path d="M1283 23C1283 17 1299 17 1299 23z" fill="#ddd"/>
<text class="u" x="1304" y="20" style="font-size:13px">登录</text>
<use href="#tri" x="1392" y="15"/>
<path d="M1408 8h2l1 10h5l1-6h-6" fill="none" stroke="#ccc" stroke-width="1.300"/><circle cx="1412" cy="21" r="1.300" fill="#ccc"/><circle cx="1416" cy="21" r="1.300" fill="#ccc"/>
<path d="M1431 23 1436 7 1441 23M1432 17H1440" fill="none" stroke="#ddd" stroke-width="2.400"/><use href="#tri" x="1452" y="15"/>
<rect x="1465" y="7" width="1" height="18" fill="#555"/><use href="#help" x="1483" y="15"/><use href="#tri" x="1500" y="15"/>
<path d="M1586 15H1596" stroke="#ddd"/><rect x="1632.500" y="11" width="9" height="10" fill="none" stroke="#ddd" stroke-width="1.200"/><path d="M1678 11 1688 21M1688 11 1678 21" stroke="#ddd" stroke-width="1.200"/>

<!-- menu -->
<text class="u" x="18" y="47">文件(F)</text><text class="u" x="80.600" y="47">编辑(E)</text><text class="u" x="144" y="47">视图(V)</text><text class="u" x="207" y="47">插入(I)</text><text class="u" x="267" y="47">格式(O)</text><text class="u" x="333" y="47">工具(T)</text><text class="u" x="396" y="47">绘图(D)</text><text class="u" x="461" y="47">标注(N)</text><text class="u" x="528" y="47">修改(M)</text><text class="u" x="596" y="47">参数(P)</text><text class="u" x="658" y="47">窗口(W)</text><text class="u" x="727" y="47">帮助(H)</text><text class="u" x="791.500" y="47" textLength="44" lengthAdjust="spacingAndGlyphs">Express</text>
<path d="M1618 41H1628" stroke="#ccc"/><path d="M1651 39h7v9h-7zM1653 39v-2h7v9h-2" fill="none" stroke="#ccc"/><path d="M1682 36 1692 46M1692 36 1682 46" stroke="#ccc" stroke-width="1.200"/>

<!-- tab row -->
<path d="M19 62.500H37M19 68H37M19 73H37" stroke="#d8d8d8" stroke-width="2"/>
<path d="M53 60 48 78M273 60 268 78" stroke="#5a6372"/>
<text class="u" x="62" y="73">开始</text>
<path d="M102 55H229L220 79H93z" fill="#3b4453"/>
<text x="110" y="73" font-size="12.500" font-weight="700" fill="#e8e8e8" textLength="89" lengthAdjust="spacingAndGlyphs">盛屹办公楼结构*</text>
<path d="M209 64 217 72M217 64 209 72" stroke="#c8c8c8" stroke-width="1.600"/>
<path d="M237 68H252M244.500 60V76" stroke="#ddd" stroke-width="2"/>

<!-- toolbars -->
<g fill="#343c4a" stroke="#252b36"><rect x="4" y="83" width="646" height="24"/><rect x="652" y="83" width="400" height="24"/><rect x="1053" y="83" width="582" height="24"/><rect x="4" y="110" width="639" height="24"/><rect x="646" y="110" width="488" height="24"/><rect x="4" y="137" width="78" height="24"/></g>
<g fill="none" stroke="#9aa0aa" stroke-dasharray="1.500 1.500"><path d="M8 86V104M656 86V104M1057 86V104M8 113V131M651 113V131M8 140V158"/></g>
<path d="M85 86V104M183 86V104M304 86V104M385 86V104M479 86V104M626 86V104M108 113V131M205 113V131M326 113V131M433 113V131M727 113V131M919 113V131M1018 113V131" stroke="#5a6372"/>
<!-- row1 -->
<g transform="translate(0,95)">
<use href="#doc" x="24"/><use href="#fold" x="47"/><use href="#save" x="70"/><use href="#print" x="99"/>
<path d="M114-8H130V-1H127L125 8H114z" fill="#a9adb3"/><use href="#mag" x="120" y="-1"/><use href="#print" x="144"/><path d="M141 4H153M149 1 153 4 149 7" fill="none" stroke="#6db4f0" stroke-width="1.800"/><use href="#dwf" x="168"/>
<path d="M190-8H203V5H190z" fill="#a9adb3"/><path d="M192-4H200M192-1H200M192 2H196" stroke="#555"/><path d="M198 0 205 8M205 0 198 8" stroke="#eee" stroke-width="1.300"/><use href="#copy" x="220.500"/><use href="#paste" x="244"/><path d="M259-8H272V5H259z" fill="#a9adb3"/><path d="M261-6H270V-1H261z" fill="#7fc0f0"/><path d="M268 8 275 1 272-1 265 5z" fill="#e9c477"/><path d="M282 0H294V8H282z" fill="#8a8e94"/><circle cx="292" cy="5" r="3.500" fill="#7a7e84" stroke="#ddd"/><use href="#pen" x="288" y="-4"/>
<path d="M310-1 317-6V-3H325V2H317V5z" fill="#d8d8d8"/><use href="#tri" x="336"/><path d="M363-1 356-6V-3H348V2H356V5z" fill="#d8d8d8"/><use href="#tri" x="372"/>
<use href="#hand" x="396"/><path d="M412-6H420M416-9V-3" stroke="#ddd"/><use href="#mag" x="418" y="0"/><path d="M433-8H445V4H433z" fill="none" stroke="#ddd"/><use href="#mag" x="442" y="0"/><path d="M459-8H471V8H459z" fill="none" stroke="#aaa" stroke-dasharray="3 2"/><path d="M462-5H470L467-8" stroke="#6db4f0" fill="none"/>
<use href="#bar" x="494"/><use href="#grd" x="518"/><use href="#grd" x="541"/><path d="M558-8 568 6 572 2 562-9z" fill="#bbb"/><path d="M558-9H567V3H558z" fill="#ddd"/><path d="M578-9H590V3H578z" fill="#e9c477"/><path d="M584-1H594V9H584z" fill="#ddd"/><use href="#calc" x="609"/><use href="#help" x="638"/>
<use href="#lay" x="673"/><path d="M676 0H685V9H676z" fill="#ddd"/><path d="M678 5H683M680.500 3V7" stroke="#333"/>
</g>
<rect x="683" y="84" width="300" height="22" fill="#fff"/>
<ellipse cx="695" cy="93" rx="5.500" ry="5.500" fill="#f5a623"/><path d="M693 99h4v4h-4z" fill="#888"/>
<circle cx="711" cy="95" r="4.500" fill="#f5a623"/><path d="M711 87V103M703 95H719M705 89 717 101M717 89 705 101" stroke="#f5a623"/>
<path d="M726 88h12v14h-12z" fill="none" stroke="#444" stroke-dasharray="3 2"/><circle cx="735" cy="99" r="3" fill="#f5a623"/>
<rect x="745.500" y="94" width="12" height="10" fill="#f5a623"/><path d="M751 94V90C751 86 757 86 757 90" fill="none" stroke="#f5a623" stroke-width="1.800"/>
<rect x="763" y="88" width="12" height="14" fill="#fff" stroke="#333"/>
<text x="781" y="100" font-size="12.500" fill="#111">0</text>
<use href="#chev" x="973" y="95"/>
<g transform="translate(0,95)"><use href="#lay" x="993" y="2"/><circle cx="994" cy="-6" r="3.500" fill="#ddd"/><path d="M986 1H1002L994-3z" fill="#7fc0f0"/><use href="#lay" x="1018" y="2"/><path d="M1012-6 1019-9V-3zM1017-6H1025" fill="#7fc0f0" stroke="#7fc0f0"/><use href="#lay" x="1040"/><path d="M1041 1H1050V9H1041z" fill="#ddd"/></g>
<!-- property combos -->
<g fill="#fff" stroke="#252b36"><rect x="1062" y="84" width="150" height="22"/><rect x="1218" y="84" width="160" height="22"/><rect x="1384" y="84" width="126" height="22"/></g><rect x="1515" y="84" width="119" height="22" fill="#f1f1f1"/>
<rect x="1066" y="88" width="12" height="14" fill="#fff" stroke="#555"/>
<text x="1084" y="100" font-size="12.500" fill="#111" textLength="45" lengthAdjust="spacingAndGlyphs">ByLayer</text><use href="#chev" x="1202" y="95"/>
<path d="M1223 95H1283" stroke="#000" stroke-width="1.300"/><text x="1288" y="100" font-size="12.500" fill="#111" textLength="45" lengthAdjust="spacingAndGlyphs">ByLayer</text><use href="#chev" x="1369" y="95"/>
<path d="M1389 94.500H1424" stroke="#000" stroke-width="1.300"/><text x="1429" y="100" font-size="12.500" fill="#111" textLength="45" lengthAdjust="spacingAndGlyphs">ByLayer</text><use href="#chev" x="1499" y="95"/>
<text x="1525" y="99" font-size="12.500" fill="#8b8b8b" textLength="46" lengthAdjust="spacingAndGlyphs">ByColor</text><use href="#chev" x="1626" y="95"/>
<!-- row2 -->
<g class="w" transform="translate(0,122)" stroke-width="1.100">
<path d="M17-8V8M32-8V8"/><path class="bl" d="M17-1H32"/>
<path d="M39-8 44-3M50 8 55 3"/><path class="bl" d="M42-6 53 5"/>
<path class="bl" d="M63 8C63-1 69-5 76-6" stroke-width="3"/><path d="M60 9H70M72-9 78-1"/>
<path d="M85 8H100M86-7V8M93-9V8M93 0H100"/><text x="94" y="-3" font-size="5" fill="#ddd" stroke="none">X</text>
<path d="M115 8C117-2 122-6 128-7"/><path class="bl" d="M121-2 130 8"/>
<path d="M137 8C139-2 144-6 150-7"/><path class="bl" d="M143 6 146-2 149 3 155 8"/>
<circle cx="167" r="7.500"/><path class="bl" d="M163-4 171 4"/>
<path d="M183 8H199M186 8 194-8M196-1 198 5"/>
<path d="M213-8V8M229-8V8"/><path d="M213-5H229" stroke="#999"/><path d="M223-4 218 2H222L218 7" stroke="#f5c040" stroke-width="2"/>
<path d="M236-8V8M250-8V8"/><path class="bl" d="M236-3H250M236 3H250"/>
<path d="M258-8V8M265-5V5M272-8V8"/><path class="bl" d="M258-1H272"/>
<path d="M281-7H296M281 7H296"/><path d="M285-7V7H291V-7" stroke="#e9c477" stroke-width="2.500"/>
<path d="M311-8V6M306 6H316"/><path class="bl" d="M303-1H320M316-4V2"/>
<rect x="333" y="-7" width="16" height="15"/><text x="341" y="4" font-size="9" fill="#ddd" stroke="none" text-anchor="middle">⊕</text>
<circle cx="364" r="8"/><path class="bl" d="M360 0H368M364-4V4"/>
<path d="M380-8V8M394-8V8M380-7H394"/><path d="M383 1 386 5 391-2" stroke="#5fcf7a" stroke-width="1.800"/>
<path d="M402 2 405-3 409 6 413-5 417 2 420 0"/>
<path d="M431 8H447M434 8V0M444 8V0"/><use href="#pen" x="436" y="-6"/><path d="M454 8H470M457 8V0M467 8V0M462-8 458 2M462-8 466 2M459-1H465"/><path d="M477-8H492M477 8H492M480-8V8M489-8V8"/><path d="M482 0 484 3 487-1" stroke="#5fcf7a"/>
</g>
<rect x="503" y="111" width="119.500" height="22" fill="#fff"/>
<text x="522" y="127" font-size="12.500" fill="#111">Standard</text><use href="#chev" x="613" y="122"/>
<path class="w" d="M627 130H643M630 130V122M640 130V122"/><use href="#pen" x="634" y="116"/>
<g transform="translate(0,122.500)"><use href="#b3" x="667"/><use href="#b4" x="690"/><use href="#b4" x="713"/><path d="M710-2H717V5H710z" fill="#343c4a" stroke="#7fc0f0"/>
<use href="#b5" x="740"/><path d="M747 0H753M750-3 754 0 750 3" fill="none" stroke="#ddd"/>
<path d="M757-9V-1M753-5H761" stroke="#ddd" stroke-width="1.400"/><path d="M764-2H774V9H764z" fill="#7fc0f0"/>
<path d="M781-6H795V9H781z" fill="#bdbdbd"/><path d="M784-3H792V6H784z" fill="#343c4a"/><path d="M784-9H798V3" fill="none" stroke="#7fc0f0" stroke-width="1.500"/>
<use href="#b6" x="809"/><path d="M812-9 819-2M819-9 812-2" stroke="#e25252" stroke-width="2.200"/>
<path d="M828-7a3 3 0 1 1 3 3" fill="none" stroke="#ddd"/><path d="M828-3H842V9H828z" fill="#343c4a"/><path d="M832-1H842V9H832z" fill="#7fc0f0"/>
<use href="#b6" x="857"/>
<path d="M874-3H886V9H874z" fill="#7fc0f0"/><path d="M880-8H890V3H886V-3H880z" fill="#d6d6d6"/><path d="M873-9H878M873-9V-5" stroke="#ddd"/>
<path d="M895-9H901V-3H895z" fill="#ef8a6a"/><path d="M901-9H907V-3H901z" fill="#7fc0f0" transform="translate(-1,0)"/><path d="M898 0H911V9H898z" fill="#7fc0f0"/><path d="M903-4H911V0H903z" fill="#d6d6d6"/>
<path d="M924 8V-3L930-8H936L941 2V8z" fill="#d0d0d0"/><path d="M932-8C938-6 941-1 941 4" fill="none" stroke="#7fc0f0" stroke-width="2.200"/>
<path d="M946 3 956-8H964V8H952z" fill="#d0d0d0"/><path d="M949 1 957-6 961-2 953 5z" fill="#7fc0f0" stroke="#eee"/>
<use href="#iso" x="982"/><path d="M971-8H975M972-6V8M975-4V8" stroke="#7fc0f0" stroke-width="1.200" fill="none"/>
<path d="M993-9H999V-3H993z" fill="#ef8a6a"/><path d="M999-9H1005V-3H999z" fill="#7fc0f0"/><path d="M995 0H1009V9H995z" fill="#d6d6d6"/><path d="M995-2H1009V2H995z" fill="#7fc0f0"/>
</g>
<g transform="translate(0,122.500)"><path d="M1023-6H1030M1026.500-9V-2" stroke="#5fcf7a" stroke-width="2"/><path d="M1026-2H1040V9H1026z" fill="#d6d6d6"/><path d="M1030 1H1036V6H1030z" fill="#6db4f0"/>
<use href="#iso" x="1056" y="-2"/><path d="M1046 9 1049 1H1053L1055 9z" fill="#e0b050"/>
<path d="M1069-7 1075-9V9L1069 7z" fill="#d6d6d6"/><path d="M1077-9 1083-7V7L1077 9z" fill="#7fc0f0"/><path d="M1076-10V10" stroke="#7fc0f0"/>
<path d="M1092-6 1097-9H1107V9H1092z" fill="#d6d6d6"/><path d="M1095-3H1104V6H1095z" fill="#2f6fa8"/><path d="M1095 2 1104-3V6H1095z" fill="#7fc0f0"/>
<use href="#iso" x="1123" y="-2"/><path d="M1115 4 1119 8 1125 1" fill="none" stroke="#5fcf7a" stroke-width="2.200"/></g>
<!-- row3 -->
<g transform="translate(0,149)"><path d="M16-4H23V7H16z" fill="#d6d6d6"/><path d="M24-4H31V7H24z" fill="#bdbdbd"/><path d="M18-1H22M18 2H22M26-1H30M26 2H30" stroke="#555"/><path d="M21 8H26V10H21z" fill="#999"/><use href="#pen" x="24" y="-6"/>
<path d="M39-4H46V7H39z" fill="#d6d6d6"/><path d="M47-4H54V7H47z" fill="#bdbdbd"/><path d="M41-1H45M41 2H45M49-1H53M49 2H53" stroke="#555"/><path d="M43-6 46-3 52-9" fill="none" stroke="#5fcf7a" stroke-width="2.200"/>
<use href="#lay" x="69" y="0"/><path d="M71 0H78V10H71z" fill="#e87070"/><path d="M71 2H78" stroke="#eee"/></g>

<!-- left palette -->
<rect x="5" y="165" width="24" height="448" fill="#343c4a" stroke="#252b36"/>
<path d="M8 169H26" stroke="#aaa" stroke-dasharray="1.500 1.500" stroke-width="2"/>
<g class="w" transform="translate(16,0)">
<path d="M-7 192 7 178"/><path d="M-7 214 7 200M-7 214l5-1M-7 214l1-5M7 200l-5 1M7 200l-1 5"/><path d="M-7 232H2M4 222C9 224 9 232 4 234" stroke-dasharray="4 2"/><path d="M0 244 7 249 5 257H-5L-7 249z"/><rect x="-7" y="268" width="13" height="10"/><path d="M-7 304C-5 298 0 293 7 291"/><circle cy="317" r="8"/><path d="M-7 336C-9 331-2 331 0 333 4 331 8 335 7 339 7 344-1 345-3 343-7 344-8 339-7 336z"/><path d="M-7 368C-6 354-2 354 0 361 2 368 6 360 7 353"/><ellipse cy="382" rx="7.500" ry="5"/><path d="M-7 404C-6 399 6 399 7 404 6 408-1 408-2 406"/>
<rect x="-7" y="423" width="10" height="8"/><circle cx="2" cy="431" r="3.500"/><rect x="-7" y="445" width="10" height="8"/><circle cx="2" cy="453" r="3.500"/>
<rect x="-6" y="486" width="12" height="12"/><path d="M-8 485H8M-8 499H8M-6 483V501M6 483V501"/><rect x="-6" y="508" width="12" height="12"/><path d="M-8 507H8M-8 521H8M-6 505V523M6 505V523"/>
<path d="M-8 552H8V566H-8zM-8 556.500H8M-8 561H8M-3 552V566M3 552V566" stroke-width="1"/>
</g>
<path d="M11 488H21V496H11z" fill="#4a7ca8"/><path d="M12 495 19 488M15 496 21 490" stroke="#8cc8f5"/>
<path d="M11 509H21V519H11z" fill="#a8b0ba"/><path d="M11 509H21V514H11z" fill="#4a7ca8"/>
<path d="M10 471h3v2h-3zM19 471h3v2h-3zM15 465h3v2h-3zM15 476h3v2h-3z" fill="#ddd"/>
<g fill="#6db4f0"><rect x="7.500" y="190" width="2.500" height="2.500"/><rect x="22" y="177" width="2.500" height="2.500"/><rect x="19" y="222" width="2.500" height="2.500"/><rect x="19" y="256" width="2.500" height="2.500"/><rect x="8" y="267" width="2.500" height="2.500"/><rect x="22" y="277" width="2.500" height="2.500"/><rect x="8" y="303" width="2.500" height="2.500"/><rect x="15" y="295" width="2.500" height="2.500"/><rect x="22" y="289" width="2.500" height="2.500"/><rect x="19" y="313" width="2.500" height="2.500"/><rect x="8" y="367" width="2.500" height="2.500"/><rect x="15" y="358" width="2.500" height="2.500"/><rect x="22" y="353" width="2.500" height="2.500"/><rect x="15" y="376" width="2.500" height="2.500"/><rect x="15" y="387" width="2.500" height="2.500"/><path d="M15 418h8v14l-8-3z"/><rect x="14" y="402" width="2.500" height="2.500"/><rect x="14" y="408" width="2.500" height="2.500"/></g>
<path d="M18 447 19 444 21 447 24 446 22 449 24 451 21 451 19 454 18 451 15 451 17 449 15 446z" fill="#f0c070"/>
<path d="M8 530H19L24 536V544H8z" fill="#e2e2e2"/><circle cx="15" cy="537" r="2.500" fill="#343c4a"/>
<text x="16" y="588" font-size="20" fill="#dcdcdc" text-anchor="middle">A</text>
<circle cx="11" cy="598" r="3.500" fill="#5fcf7a"/><circle cx="20" cy="606" r="3.500" fill="#7fc0f0"/><path d="M16 597H21V602" fill="none" stroke="#fff" stroke-width="1.300"/>

<!-- right palette -->
<rect x="1676" y="165" width="23" height="415" fill="#343c4a" stroke="#252b36"/>
<path d="M1679 169H1696" stroke="#aaa" stroke-dasharray="1.500 1.500" stroke-width="2"/>
<g class="w" transform="translate(1687,0)">
<path d="M-6 186 3 176 8 179-1 190z" fill="#e9c477" stroke="none"/><path d="M-6 186-1 190-4 193-8 191z" fill="#e06060" stroke="none"/><path d="M-8 193H8" class="bl"/>
<circle cx="-4" cy="201" r="3"/><path d="M1 201H7V206"/><path class="bl" d="M0 211a3 3 0 1 0 0-.1M7 211a3 3 0 1 0 0-.1"/>
<path d="M-2 224V239H-8z"/><path class="bl" d="M2 224V239H8z"/><path class="bl" d="M8 246H-4C-10 246-10 256-4 256H8M8 250H-3C-6 250-6 253-3 253H8"/>
<rect x="-7" y="266" width="5" height="5"/><rect x="1" y="266" width="5" height="5" class="bl"/><rect x="-7" y="275" width="5" height="5" class="bl"/><rect x="1" y="275" width="5" height="5" class="bl"/>
<path d="M-8 294H8M0 286V302M-2 288 0 285 2 288M-2 300 0 303 2 300M-6 292-9 294-6 296M6 292 9 294 6 296" stroke="#eee"/>
<path d="M6 314A8 8 0 1 1 0 309M0 306 4 309 0 312"/><path class="bl" d="M-4 333H7V345H-4z"/><path d="M-8 339H1V348H-8z"/>
<path d="M-5 354H2L6 358V368H-5z"/><path d="M-6 380 6 392M-6 392 6 380"/><circle cx="-5" cy="392" r="2"/><circle cx="-5" cy="380" r="2"/>
<path class="bl" d="M-8 405H5M2 401V409"/><rect x="-7" y="422" width="14" height="10"/><path d="M-7 444V455H7V444"/><path class="bl" d="M-8 472H-2M2 472H8"/><path d="M-6 470V474M6 470V474"/><path d="M-7 501C-7 494-2 489 6 489"/><path d="M-7 525C-7 516-1 511 7 511"/><path class="bl" d="M-8 544C-4 534 4 550 8 540"/>
<path d="M-7 554 3 552V565H-7zM3 552 7 555V564L3 565"/></g>

<!-- bottom tabs -->
<path d="M19 1302H37M19 1308H37M19 1313H37" stroke="#d8d8d8" stroke-width="2"/>
<path d="M53 1295H103L94 1319H45.500z" fill="#3b4453"/>
<text x="62" y="1313" font-size="12.500" font-weight="700" fill="#e8e8e8">模型</text>
<text class="u" x="110" y="1313">布局1</text>
<path d="M155 1299 150 1317M199 1299 194 1317" stroke="#5a6372"/>
<path d="M165 1307H181M173 1299V1315" stroke="#ddd" stroke-width="2"/>

<!-- status bar -->
<g fill="#3b4453"><rect x="5.500" y="1325" width="413.500" height="24"/><rect x="423" y="1325" width="210" height="24"/><rect x="636" y="1325" width="30" height="24"/><rect x="669" y="1325" width="64" height="24"/><rect x="736" y="1325" width="154" height="24"/><rect x="891" y="1325" width="64" height="24"/><rect x="957" y="1325" width="23" height="24"/><rect x="982" y="1325" width="88" height="24"/><rect x="1075" y="1325" width="103" height="24"/><rect x="1181" y="1325" width="146" height="24"/><rect x="1330" y="1325" width="39" height="24"/><rect x="1371" y="1325" width="24" height="24"/><rect x="1398" y="1325" width="97" height="24"/><rect x="1496" y="1325" width="24" height="24"/><rect x="1523" y="1325" width="40" height="24"/><rect x="1566" y="1325" width="22" height="24"/><rect x="1590" y="1325" width="25" height="24"/><rect x="1618" y="1325" width="30" height="24"/><rect x="1652" y="1325" width="23" height="24"/><rect x="1677" y="1325" width="24" height="24"/></g>
<g fill="#5b8fc4"><rect x="762" y="1325" width="22" height="24"/><rect x="787" y="1325" width="22" height="24"/><rect x="916" y="1325" width="22" height="24"/><rect x="982" y="1325" width="22" height="24"/><rect x="1075" y="1325" width="22" height="24"/><rect x="1139" y="1325" width="22" height="24"/><rect x="1182" y="1325" width="22" height="24"/><rect x="1591" y="1325" width="23" height="24"/></g>
<text x="449" y="1342" font-size="13" fill="#e4e4e4" textLength="179" lengthAdjust="spacingAndGlyphs">1572.2890, 258823.5942, 0.0000</text>
<text x="639" y="1342" font-size="12.500" fill="#e4e4e4">模型</text>
<text x="1258" y="1342" font-size="13" fill="#e4e4e4" textLength="52" lengthAdjust="spacingAndGlyphs">1:1 / 100%</text>
<text x="1428" y="1342" font-size="12.500" fill="#e4e4e4">小数</text>
<g class="w">
<path d="M674 1329V1345M680 1329V1345M686 1329V1345M672 1333H688M672 1337H688M672 1341H688" stroke-width="1.100"/>
<path d="M699 1331h1M705 1331h1M711 1331h1M699 1337h1M705 1337h1M711 1337h1M699 1343h1M705 1343h1M711 1343h1" stroke-width="2"/>
<path d="M741 1339V1345H747V1339zM747 1339H749V1331H756V1338H749"/>
<path d="M765 1335H771M768 1332V1338" stroke="#fff"/><rect x="771" y="1339" width="9" height="5" fill="#fff" stroke="none"/>
<path d="M790 1330V1345H805" stroke="#fff"/><rect x="790" y="1340" width="5" height="5" stroke="#fff"/>
<circle cx="821" cy="1338" r="6.500"/><path d="M817 1340 826 1331"/>
<path d="M853 1330 862 1346" stroke="#e25252"/><path d="M860 1330 854 1346" stroke="#5fcf7a"/>
<path d="M895 1345 908 1330M895 1345H911"/>
<rect x="921" y="1332" width="14" height="14" stroke="#fff"/><rect x="919" y="1329" width="4.500" height="4.500" fill="#5b8fc4" stroke="#fff"/>
<path d="M960 1331H976M960 1337H970M976 1337H971M960 1343H967" stroke-width="3"/>
<path d="M1011 1329H1017M1014 1326V1332"/>
<path d="M1037 1335H1047V1344H1037zM1037 1335 1041 1330H1051V1340L1047 1344"/><rect x="1035" y="1342" width="5" height="5" stroke="#f0a878"/>
<path d="M1081 1329V1346H1094M1081 1330 1078 1334M1081 1330 1084 1334M1094 1346 1090 1343M1094 1346 1090 1349" stroke="#fff" stroke-width="1.500"/><path d="M1088 1330 1085 1336H1089L1086 1341" stroke="#fff"/>
<path d="M1106 1331H1120V1344H1106z" stroke-dasharray="3 2" stroke-width="1"/>
<path d="M1150 1329 1143 1345H1157z" stroke="#fff"/><circle cx="1150" cy="1340" r="3.500" stroke="#fff"/>
<path d="M1193 1330 1186 1346 1193 1341 1200 1346z" fill="#fff" stroke="none"/><circle cx="1199" cy="1332" r="2" stroke="#fff"/>
<path d="M1218 1330 1211 1346 1218 1341 1225 1346z" fill="#ccc" stroke="none"/>
<path d="M1240 1330 1233 1346 1240 1341 1247 1346z" fill="#ccc" stroke="none"/>
<path d="M1342 1328V1346M1333 1337H1351M1336 1331 1348 1343M1348 1331 1336 1343" stroke-width="2.600" stroke="#d8d8d8"/><circle cx="1342" cy="1337" r="5" fill="#3b4453" stroke="#d8d8d8" stroke-width="2.500"/>
<path d="M1375 1337H1391M1383 1329V1345" stroke-width="1.800"/>
<path d="M1404 1329H1412V1346H1404zM1404 1333H1408M1404 1337H1408M1404 1341H1408"/>
<rect x="1502" y="1329" width="12" height="16"/><path d="M1505 1333H1511M1505 1337H1511M1505 1341H1511"/>
<rect x="1526" y="1329" width="14" height="15"/><path d="M1526 1333H1540"/><rect x="1534" y="1340" width="6" height="5" fill="#ddd"/>
<path d="M1571 1330H1576V1337H1571zM1577 1345H1583L1580 1340z"/><circle cx="1582" cy="1333" r="3"/>
<circle cx="1603" cy="1337" r="7.500" stroke="#fff"/><path d="M1599 1342 1607 1332" stroke="#fff"/>
<rect x="1656" y="1329" width="14" height="15"/><path d="M1659 1341 1667 1332M1663 1332H1667V1336M1659 1337V1341H1663"/>
<path d="M1680 1330H1698M1680 1337H1698M1680 1344H1698" stroke-width="2"/>
</g>
<path d="M986 1329H1000V1345H986z" fill="#fff"/><path d="M986 1329h3v3h-3zM992 1329h3v3h-3zM989 1332h3v3h-3zM995 1332h3v3h-3zM986 1335h3v3h-3zM992 1335h3v3h-3zM989 1338h3v3h-3zM995 1338h3v3h-3zM986 1341h3v3h-3zM992 1341h3v3h-3z" fill="#4a5262"/>
<path d="M1013 1333H1025V1346H1013z" fill="#86dba0"/><path d="M1111 1329h3v3h-3zM1104 1342h3v3h-3zM1117 1342h3v3h-3zM1104 1329h3v3h-3z" fill="#7fc0f0"/>
<path d="M1632 1328h3v6h6v3h-6" fill="#2f6fa8"/><path d="M1626 1338H1634V1346H1626z" fill="#f5b623"/><path d="M1633 1342 1636 1345 1641 1339" fill="none" stroke="#5fcf7a" stroke-width="1.800"/><rect x="1636" y="1329" width="6" height="6" fill="#ddd"/>
<use href="#tri" x="725" y="1337"/><use href="#tri" x="842" y="1337"/><use href="#tri" x="882" y="1337"/><use href="#tri" x="947" y="1337"/><use href="#tri" x="1063" y="1337"/><use href="#tri" x="1130" y="1337"/><use href="#tri" x="1170" y="1337"/><use href="#tri" x="1319" y="1337"/><use href="#tri" x="1361" y="1337"/><use href="#tri" x="1487" y="1337"/><use href="#tri" x="1555" y="1337"/>
</svg>
</body></html>
